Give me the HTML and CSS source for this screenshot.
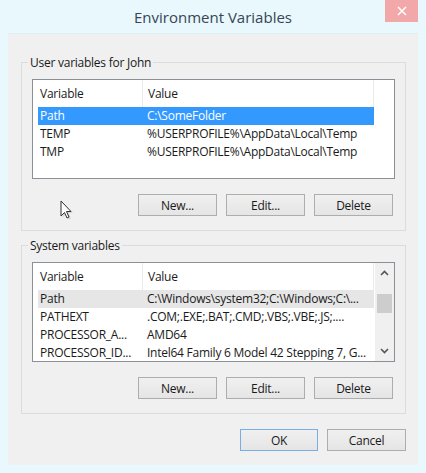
FILE: index.html
```html
<!DOCTYPE html>
<html lang="en">
<head>
  <meta charset="UTF-8" />
  <title>Environment Variables</title>
  <link rel="stylesheet" href="styles.css">
</head>
<body>
  <div class="window">
    <div class="titlebar">
      <span class="title">Environment Variables</span>
      <div class="close">
        <svg width="10" height="10" viewBox="0 0 10 10"><path d="M1 1 L9 9 M9 1 L1 9" stroke="#fff" stroke-width="1.6"/></svg>
      </div>
    </div>

    <div class="client">
      <div class="group">
        <span class="group-label">User variables for John</span>
        <div class="list">
          <div class="list-head">
            <span class="col-name">Variable</span>
            <span class="col-value">Value</span>
          </div>
          <div class="row selected"><span class="col-name">Path</span><span class="col-value">C:\SomeFolder</span></div>
          <div class="row"><span class="col-name">TEMP</span><span class="col-value">%USERPROFILE%\AppData\Local\Temp</span></div>
          <div class="row"><span class="col-name">TMP</span><span class="col-value">%USERPROFILE%\AppData\Local\Temp</span></div>
        </div>
        <div class="buttons">
          <button>New...</button>
          <button>Edit...</button>
          <button>Delete</button>
        </div>
      </div>

      <div class="group">
        <span class="group-label">System variables</span>
        <div class="list scrolled">
          <div class="list-body">
            <div class="list-head">
              <span class="col-name">Variable</span>
              <span class="col-value">Value</span>
            </div>
            <div class="row inactive"><span class="col-name">Path</span><span class="col-value">C:\Windows\system32;C:\Windows;C:\...</span></div>
            <div class="row"><span class="col-name">PATHEXT</span><span class="col-value">.COM;.EXE;.BAT;.CMD;.VBS;.VBE;.JS;....</span></div>
            <div class="row"><span class="col-name">PROCESSOR_A...</span><span class="col-value">AMD64</span></div>
            <div class="row"><span class="col-name">PROCESSOR_ID...</span><span class="col-value">Intel64 Family 6 Model 42 Stepping 7, G...</span></div>
          </div>
          <div class="scrollbar">
            <svg class="arrow" width="9" height="6" viewBox="0 0 9 6"><path d="M1 5 L4.5 1.5 L8 5" fill="none" stroke="#555" stroke-width="1.6"/></svg>
            <div class="track"><div class="thumb"></div></div>
            <svg class="arrow" width="9" height="6" viewBox="0 0 9 6"><path d="M1 1 L4.5 4.5 L8 1" fill="none" stroke="#555" stroke-width="1.6"/></svg>
          </div>
        </div>
        <div class="buttons">
          <button>New...</button>
          <button>Edit...</button>
          <button>Delete</button>
        </div>
      </div>

      <div class="buttons dialog-buttons">
        <button class="default">OK</button>
        <button>Cancel</button>
      </div>
    </div>

    <svg class="cursor" width="14" height="21" viewBox="0 0 14 21">
      <path d="M2.5 2.5 L2.5 17.5 L6 14 L8.5 19.5 L11 18.5 L8.5 13 L13 13 Z" fill="#bbb" opacity="0.5"/>
      <path d="M1 1 L1 16 L4.5 12.5 L7 18 L9 17 L6.5 11.5 L11 11.5 Z" fill="#fff" stroke="#333" stroke-width="1"/>
    </svg>
  </div>
</body>
</html>
```

FILE: styles.css
```css
body {
  margin: 0;
  background: #e8f8fc;
  font-family: "Segoe UI", "Open Sans", sans-serif;
  font-size: 12px;
  letter-spacing: -0.25px;
  color: #1a1a1a;
}
.window {
  position: relative;
  width: 426px;
  height: 473px;
}
.titlebar {
  position: relative;
  height: 33px;
  display: flex;
  align-items: center;
  justify-content: center;
}
.title {
  font-size: 15px;
  letter-spacing: 0;
  color: #364656;
  margin-top: 1px;
}
.close {
  position: absolute;
  top: 0;
  left: 385px;
  width: 33px;
  height: 22px;
  background: #f2a7a9;
  display: flex;
  align-items: center;
  justify-content: center;
}
.client {
  margin: 0 8px;
  height: 432px;
  box-sizing: border-box;
  background: #f0f0f0;
  border-top: 1px solid #dfeef3;
  padding: 28px 12px 0 13px;
}
.group {
  border: 1px solid #dcdcdc;
  height: 169px;
  box-sizing: border-box;
  padding: 15px 10px 0 10px;
  margin-bottom: 14px;
}
.group-label {
  display: block;
  width: max-content;
  margin: -23px 0 8px -4px;
  padding: 0 2px;
  background: #f0f0f0;
  line-height: 16px;
}
.list {
  height: 100px;
  box-sizing: border-box;
  border: 1px solid #8b8f96;
  background: #fff;
  padding: 0 0 0 5px;
}
.list.scrolled {
  display: flex;
}
.list-body {
  flex: 1;
}
.list-head {
  height: 27px;
  display: flex;
  align-items: center;
  width: 336px;
}
.list-head .col-name,
.list-head .col-value {
  border-right: 1px solid #eaeaea;
  height: 27px;
  line-height: 27px;
}
.col-name {
  width: 102px;
  padding-left: 2px;
  flex-shrink: 0;
  white-space: nowrap;
  overflow: hidden;
}
.col-value {
  flex: 1;
  padding-left: 5px;
  white-space: nowrap;
}
.row {
  display: flex;
  width: 336px;
  height: 18px;
  line-height: 18px;
}
.row.selected {
  background: #3399ff;
  color: #fff;
}
.row.inactive {
  background: #e6e6e6;
}
.scrollbar {
  width: 19px;
  background: #f0f0f0;
  display: flex;
  flex-direction: column;
  align-items: center;
}
.scrollbar .arrow {
  margin: 7px 0;
}
.track {
  flex: 1;
  width: 100%;
  padding-top: 11px;
}
.thumb {
  margin: 0 2px;
  height: 19px;
  background: #cdcdcd;
}
.buttons {
  display: flex;
  justify-content: flex-end;
  gap: 9px;
  margin-top: 15px;
  padding-right: 2px;
}
button {
  width: 79px;
  height: 22px;
  box-sizing: border-box;
  border: 1px solid #adadad;
  background: linear-gradient(#f0f0f0, #e5e5e5);
  font-family: inherit;
  font-size: 12px;
  letter-spacing: -0.25px;
  color: #1a1a1a;
  padding: 0;
}
button.default {
  border-color: #78ade6;
  width: 78px;
}
.dialog-buttons {
  margin-top: 15px;
  padding-right: 0;
}
.cursor {
  position: absolute;
  left: 60px;
  top: 200px;
}
```
